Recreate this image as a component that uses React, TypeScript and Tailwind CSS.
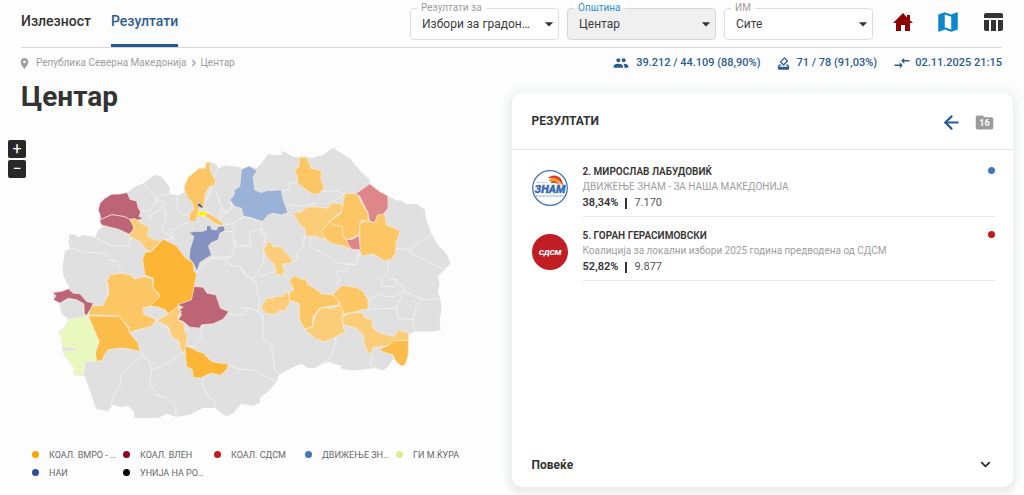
import { useState } from "react";
import type { ReactNode } from "react";
import { ArrowLeft, ChevronDown, ChevronRight } from "lucide-react";
import {
  MdArrowDropDown,
  MdCompareArrows,
  MdFolder,
  MdGroup,
  MdHowToVote,
  MdMap,
  MdPlace,
  MdTableChart,
} from "react-icons/md";

type Region = { d: string; fill: string };

// --- MAP DATA ---
const COUNTRY =
  "M68 375L75 335 90 325 85 310 88 284 105 284 115 292 130 285 165 292 175 270 188 260 180 245 182 230 175 210 180 190 195 175 215 163 240 162 262 158 285 140 310 130 345 104 365 110 388 140 390 162 415 167 432 158 433 140 445 112 478 85 497 85 497 68 512 66 528 72 535 85 560 76 600 82 608 88 628 78 650 85 665 70 685 42 705 45 725 45 728 32 765 52 800 50 815 55 850 45 870 30 888 22 892 15 885 28 910 42 930 55 960 90 990 120 990 132 1020 155 1045 168 1070 182 1085 182 1100 193 1130 192 1155 208 1160 240 1175 280 1195 315 1220 340 1233 370 1215 390 1195 410 1200 430 1195 455 1203 480 1206 510 1200 540 1203 570 1185 575 1125 575 1105 585 1105 640 1095 677 1080 677 1062 658 1045 680 1030 692 1010 685 945 692 905 688 903 678 870 668 850 670 825 685 805 685 785 672 750 688 718 705 708 730 685 755 660 775 660 790 640 798 605 792 580 820 560 830 525 805 490 805 450 825 408 832 380 822 355 835 283 835 282 815 265 800 245 802 218 795 205 815 168 807 135 710 100 705 103 682 75 650 65 625 65 600 57 575 75 560 85 540 65 520 58 492 40 475 40 458 85 448 88 440 70 410Z";

const BORDERS = [
  "M310 130L350 175 348 190 325 215 300 212",
  "M345 180L365 165 390 162M350 180L375 185 360 210 325 228 340 238",
  "M375 200L378 240 365 270 385 285 402 295 372 300",
  "M410 167L415 215 432 225 448 222M402 280L395 275 425 255 448 245",
  "M402 295L395 285 405 310 408 318",
  "M165 292L215 318 270 317 272 290M90 325L140 337 200 340 210 360 230 365 243 400",
  "M535 85L520 115M515 145L490 200M528 150L545 200 540 230 550 260M515 140L500 180",
  "M545 200L555 220 575 200 570 180M550 225L565 215 600 190 610 220",
  "M610 230L580 250 555 255M552 275L580 275 585 320 575 350 515 352M580 250L585 270",
  "M585 300L590 320 630 318M575 350L560 358 515 355 490 375 468 398M560 358L570 375 600 380 620 410",
  "M605 225L610 230 665 245 665 265 630 275 630 300 632 320 605 315",
  "M665 265L680 290 672 315M665 265L662 275 680 300",
  "M600 380L625 410 640 415 650 405 660 380 672 370 672 318",
  "M745 220L725 210M720 155L745 150 750 128 772 128M720 180L745 195 790 198 830 190",
  "M840 155L885 152 915 162 870 190",
  "M795 285L790 320 770 340 770 360 755 365M812 292L812 320 850 340 895 370 950 375 960 330",
  "M960 345L925 380 920 392 890 395 900 420 890 437",
  "M1045 360L1045 400 1025 420 1025 440 1065 440 1072 420 1045 415M1068 325L1110 330 1140 305 1175 285",
  "M1110 330L1120 345 1165 365 1215 390",
  "M650 430L650 455 660 480 655 520 670 525 670 600 695 615 705 690 720 705",
  "M600 505L630 505 655 515M625 410L650 432M660 410L705 395M730 400L750 418",
  "M890 595L885 615 875 650 855 665 880 670M915 555L895 580 885 600",
  "M985 470L990 480 1020 460 1040 470 1065 470 1090 455 1095 440 1075 430M985 508L1070 505 1075 535 1120 540 1125 575",
  "M1090 455L1150 478 1200 478M1150 478L1130 500 1120 540M1070 505L1085 470",
  "M990 640L998 650 992 675 1010 685",
  "M600 688L640 690 670 705 708 725",
  "M58 492L85 480 125 480M65 520L85 540 140 530M145 525L160 498 190 500 205 460 202 420",
  "M270 575L300 570 350 545M350 540L385 565 395 590 425 610 428 640M308 650L325 660 335 690 365 680 400 660 430 640",
  "M300 635L310 645 245 700 240 740 218 775 213 800M170 665L135 665 130 705",
  "M335 690L330 730 350 765 380 775 408 800 408 832",
  "M435 575L455 560 480 565 487 590 465 622 440 618M485 565L520 520M565 520L600 528 630 505M565 675L600 688",
  "M490 712L487 730 505 770 525 785 525 805",
];

const REGIONS: Region[] = [
  { fill: "#bd6577", d: "M180 245L182 230 175 210 180 190 195 175 215 163 240 162 262 158 270 178 290 183 295 205 302 215 298 230 312 235 285 243 270 238 282 260 280 272 268 283 235 268 185 255Z" },
  { fill: "#fbcd79", d: "M270 238L285 236 312 255 328 262 322 288 345 300 365 303 332 335 318 328 300 305 268 290 270 282 283 265Z" },
  { fill: "#fcc665", d: "M433 140L445 112 478 85 497 85 497 68 510 66 512 95 520 110 528 120 525 135 508 140 495 165 492 200 475 215 480 225 468 235 472 243 448 245 450 220 462 208 458 190 440 168Z" },
  { fill: "#e0e0e0", d: "M478 205L500 208 505 218 525 232 545 255 520 240 490 230 475 222Z" },
  { fill: "#fcc665", d: "M492 226L505 220 530 234 548 248 548 260 525 250Z" },
  { fill: "#ffef00", d: "M473 218L485 214 503 216 498 225 488 230 473 225Z" },
  { fill: "#555e78", d: "M472 190L480 190 491 202 486 205 472 197Z" },
  { fill: "#8591c1", d: "M447 278L468 274 485 275 500 270 500 258 512 256 515 268 530 270 535 260 552 258 556 272 540 280 535 300 515 308 506 318 515 345 480 368 472 395 460 370 448 355 450 330 462 290Z" },
  { fill: "#9ab1d8", d: "M605 88L628 78 652 92 640 110 645 150 665 158 680 152 725 150 730 178 745 218 725 225 700 220 685 225 668 245 640 235 610 228 605 205 585 200 570 180 583 165 583 150 600 140Z" },
  { fill: "#fcc665", d: "M778 52L800 52 815 85 847 92 843 115 853 145 835 163 818 162 772 130 775 118 765 90 778 80Z" },
  { fill: "#fbcd79", d: "M760 220L785 215 800 203 820 200 865 205 870 190 900 190 910 200 905 215 870 245 850 270 860 295 835 295 830 288 800 290 795 265 780 255Z" },
  { fill: "#fcc665", d: "M915 162L950 160 970 195 985 220 985 245 965 240 958 285 925 300 910 290 905 260 875 255 870 245 905 220Z" },
  { fill: "#fcc665", d: "M870 245L880 255 908 260 910 290 922 300 935 328 910 318 875 310 855 295 845 275Z" },
  { fill: "#de868a", d: "M947 162L990 132 1020 155 1045 168 1045 205 1030 225 1015 225 1005 248 990 245 985 218 970 190 960 168Z" },
  { fill: "#fcc665", d: "M960 250L980 243 1005 248 1015 225 1035 222 1040 255 1082 272 1070 305 1068 340 1055 358 1035 363 1000 342 970 348 960 335Z" },
  { fill: "#de868a", d: "M920 300L938 298 958 287 962 330 935 328 925 312Z" },
  { fill: "#fcb535", d: "M370 297L410 318 438 355 460 368 462 395 471 402 463 440 462 480 440 485 420 493 412 502 385 522 375 510 330 500 340 480 360 465 340 445 340 415 315 405 308 360 315 338 335 335Z" },
  { fill: "#fcc665", d: "M192 420L205 418 210 405 245 400 270 405 285 418 312 410 338 418 340 445 360 470 330 500 310 505 315 525 350 540 335 560 300 568 270 578 265 560 235 528 145 525 155 498 188 498 207 460 202 425Z" },
  { fill: "#e0e0e0", d: "M308 505L335 500 350 500 375 510 382 522 350 540 330 525 312 525Z" },
  { fill: "#bd6577", d: "M463 440L490 442 502 460 528 465 535 485 542 505 567 515 550 538 520 552 485 555 480 565 450 562 430 545 415 540 425 525 418 510 430 502 413 495 440 485 455 480Z" },
  { fill: "#bd6577", d: "M38 458L65 455 85 447 100 460 120 462 140 485 160 490 155 502 140 527 133 520 132 492 110 480 85 475 60 490 40 480 48 468Z" },
  { fill: "#e9f8bd", d: "M85 540L145 528 165 565 178 600 168 625 170 665 135 665 130 708 100 705 103 685 88 665 75 645 70 625 65 600 57 575 75 565Z" },
  { fill: "#e0e0e0", d: "M65 628L80 622 118 627 100 633 70 633Z" },
  { fill: "#fcbc4a", d: "M145 528L238 530 265 565 270 580 295 610 300 635 270 628 245 625 205 630 190 650 190 660 170 665 166 640 178 605Z" },
  { fill: "#fbcd79", d: "M350 543L385 522 412 502 425 515 415 525 415 540 432 550 435 575 442 590 438 625 430 640 420 625 418 605 395 590 385 560Z" },
  { fill: "#fcb535", d: "M435 618L455 625 475 635 490 640 515 665 540 670 567 673 560 690 542 707 515 700 490 710 485 715 460 713 458 690 440 680Z" },
  { fill: "#fbcd79", d: "M682 308L690 305 702 322 722 320 745 345 758 360 755 370 733 372 728 380 735 395 728 405 708 405 705 375 680 350 670 325 680 320Z" },
  { fill: "#fbcd79", d: "M665 500L680 475 700 475 710 468 725 470 745 455 752 485 735 515 720 512 705 523 680 522 668 510Z" },
  { fill: "#fcc665", d: "M748 420L765 408 790 420 795 412 805 435 830 448 845 462 880 465 900 480 895 490 905 495 865 500 840 505 820 530 818 560 795 568 780 540 778 490 750 482 748 460 762 450Z" },
  { fill: "#fcc665", d: "M880 462L908 437 950 442 970 455 985 480 985 508 965 510 950 515 910 523 900 490 890 475Z" },
  { fill: "#fbcd79", d: "M795 570L818 562 825 530 845 502 865 505 880 505 900 495 910 510 907 545 915 578 890 590 855 607 825 595Z" },
  { fill: "#fbcd79", d: "M907 532L930 520 965 517 975 533 998 540 1000 565 1020 580 1060 590 1070 583 1075 570 1107 580 1107 603 1060 607 1045 618 1000 623 995 640 985 640 975 615 970 585 950 565 910 555Z" },
  { fill: "#fcbc4a", d: "M1018 630L1045 618 1060 603 1107 602 1105 650 1095 678 1082 677 1065 658 1060 645 1035 638Z" },
];

const legend = [
  { label: "КОАЛ. ВМРО - …", dot: "bg-[#ffa500]" },
  { label: "КОАЛ. ВЛЕН", dot: "bg-[#900020]" },
  { label: "КОАЛ. СДСМ", dot: "bg-[#c11b20]" },
  { label: "ДВИЖЕЊЕ ЗН…", dot: "bg-[#4677b5]" },
  { label: "ГИ М.ЌУРА", dot: "bg-[#dfed8f]" },
  { label: "НАИ", dot: "bg-[#2c4f9e]" },
  { label: "УНИЈА НА РО…", dot: "bg-black" },
];

function MunicipalityMap() {
  return (
    <svg
      viewBox="0 0 1245 870"
      className="block w-full"
      role="img"
      aria-label="Мапа"
    >
      <path d={COUNTRY} fill="#e0e0e0" />
      <g fill="none" stroke="#f1f1f1" strokeWidth="3" strokeLinejoin="round">
        {BORDERS.map((d) => (
          <path key={d} d={d} />
        ))}
      </g>
      <g stroke="#f8eee0" strokeWidth="2" strokeLinejoin="round">
        {REGIONS.map((r) => (
          <path key={r.d} d={r.d} fill={r.fill} />
        ))}
      </g>
      <path
        d="M180 240L215 224 255 230 272 240"
        fill="none"
        stroke="#f1dce0"
        strokeWidth="3"
      />
    </svg>
  );
}

function ZnamLogo() {
  return (
    <svg viewBox="0 0 36 36" className="size-9 shrink-0 mt-[7px]" aria-hidden="true">
      <circle cx="18" cy="18" r="17.3" fill="#fff" stroke="#4677b5" strokeWidth="1.3" />
      <path d="M16 8C21 3 31 5 31 16C28 10 23 8 16 8Z" fill="#e5342b" />
      <path d="M17 9.500C23 6 28 9 30 16C26 11 22 10 17 11.500Z" fill="#f9a51c" />
      <path d="M19 11.500C23 10 26 12 28 15C25 13 22 12.500 19 13Z" fill="#e5342b" />
      <path d="M5 12.500h10" stroke="#a9bfdd" strokeWidth="1" strokeDasharray="1 .5" />
      <text
        x="18"
        y="23"
        textAnchor="middle"
        fontSize="11"
        fontWeight="900"
        fontStyle="italic"
        fill="#3569ae"
        stroke="#3569ae"
        strokeWidth=".3"
      >
        ЗНАМ
      </text>
      <path d="M4 26h28" stroke="#9db6d8" strokeWidth="1.500" strokeDasharray="1 .4" />
    </svg>
  );
}

function SdsmLogo() {
  return (
    <svg viewBox="0 0 36 36" className="size-9 shrink-0 mt-[7px]" aria-hidden="true">
      <circle cx="18" cy="18" r="18" fill="#c01d24" />
      <text
        x="18"
        y="21"
        textAnchor="middle"
        fontSize="8"
        fontWeight="900"
        fontStyle="italic"
        fill="#fff"
      >
        СДСМ
      </text>
    </svg>
  );
}

type FilterProps = {
  id: string;
  label: string;
  value: string;
  active?: boolean;
};

function FilterSelect({ id, label, value, active }: FilterProps) {
  return (
    <div className="relative w-[149px]">
      <label
        htmlFor={id}
        className={`absolute -top-2 left-[7px] px-1 text-[10px] leading-4 ${
          active
            ? "text-[#2f8fd0] bg-linear-to-b from-white from-50% to-[#f0f0f0] to-50%"
            : "text-[#9e9e9e] bg-white"
        }`}
      >
        {label}
      </label>
      <select
        id={id}
        defaultValue={value}
        className={`block w-full h-8 pl-[11px] pr-6 text-xs text-[#3c3c3c] appearance-none truncate rounded border outline-none ${
          active ? "bg-[#f0f0f0] border-[#d5d5d5]" : "bg-white border-[#dedede]"
        }`}
      >
        <option>{value}</option>
      </select>
      <MdArrowDropDown
        size={20}
        className="absolute right-0 top-1.5 text-[#333] pointer-events-none"
      />
    </div>
  );
}

type CandidateProps = {
  logo: ReactNode;
  name: string;
  party: string;
  percent: string;
  votes: string;
  dot: string;
};

function Candidate({ logo, name, party, percent, votes, dot }: CandidateProps) {
  return (
    <li className="flex gap-[15px] pl-5 pr-[18px] pt-[10px]">
      {logo}
      <div className="flex-1 min-w-0 pb-[3px] border-b border-[#e6e6e6]">
        <div className="flex justify-between">
          <h3 className="text-[10px] leading-[18px] font-semibold text-[#333]">{name}</h3>
          <span className={`size-[7px] mt-1 rounded-full ${dot}`} />
        </div>
        <p className="text-[10px] leading-3 text-[#9e9e9e]">{party}</p>
        <p className="flex items-center text-[11px] leading-5 text-[#555]">
          <span className="font-semibold text-[#333]">{percent}</span>
          <span className="w-[2px] h-[11px] mx-[7px] bg-[#333]" />
          {votes}
        </p>
      </div>
    </li>
  );
}

export default function App() {
  const [zoom, setZoom] = useState(1);

  return (
    <div className="min-h-screen overflow-hidden bg-[#fdfdfd] font-[Roboto,'Open_Sans',sans-serif] text-[#333]">
      {/* Header */}
      <header className="flex justify-between ml-[21px] mr-[22px] h-12 border-b border-[#d8d8d8]">
        <nav className="flex gap-5 text-sm font-medium">
          <a href="#turnout" className="flex items-center pb-[5px]">
            Излезност
          </a>
          <a
            href="#results"
            className="flex items-center pt-[3px] pb-[5px] text-[#2c5c8f] border-b-3 border-[#255a8c]"
          >
            Резултати
          </a>
        </nav>
        <div className="flex items-start pt-2">
          <div className="flex gap-2">
            <FilterSelect id="race" label="Резултати за" value="Избори за градон…" />
            <FilterSelect id="municipality" label="Општина" value="Центар" active />
            <FilterSelect id="station" label="ИМ" value="Сите" />
          </div>
          <div className="flex items-center gap-5 h-7 ml-[18px] -mr-[3px]">
            <button aria-label="Почетна" className="text-[#8b0000]">
              <svg viewBox="0 0 24 24" className="size-6" fill="currentColor">
                <path d="M10 21v-6h4v6h5v-8h3l-3-2.700V5h-3v2.600L12 3 2 13h3v8z" />
              </svg>
            </button>
            <button aria-label="Мапа" className="text-[#0d86cb]">
              <MdMap size={26} />
            </button>
            <button aria-label="Табела">
              <MdTableChart size={24} />
            </button>
          </div>
        </div>
      </header>

      {/* Breadcrumb and totals */}
      <div className="flex justify-between ml-[21px] mr-[22px] pt-[5px] text-[11px] leading-5">
        <div className="flex items-center text-[10px] text-[#9e9e9e]">
          <MdPlace size={13} className="-ml-[3px] mr-[5px]" />
          <a href="#country">Република Северна Македонија</a>
          <ChevronRight size={10} strokeWidth={3} className="mx-[2px]" />
          <a href="#center">Центар</a>
        </div>
        <div className="flex gap-4 font-medium text-[#2c5c8f]">
          <span className="flex items-center gap-[7px]">
            <MdGroup size={16} /> 39.212 / 44.109 (88,90%)
          </span>
          <span className="flex items-center gap-[5px]">
            <MdHowToVote size={15} /> 71 / 78 (91,03%)
          </span>
          <span className="flex items-center gap-1">
            <MdCompareArrows size={18} /> 02.11.2025 21:15
          </span>
        </div>
      </div>

      <main className="flex pr-[11px]">
        <section className="flex-1 min-w-0">
          <h1 className="ml-[21px] mt-1.5 text-[28px] leading-9 font-bold">Центар</h1>

          <div className="flex mt-[25px] pl-2">
            <div className="flex flex-col gap-[2px] w-8">
              <button
                aria-label="Зголеми"
                onClick={() => setZoom(Math.min(zoom + 0.25, 3))}
                className="size-[18px] rounded-xs bg-[#282828] text-white text-base leading-[18px]"
              >
                +
              </button>
              <button
                aria-label="Намали"
                onClick={() => setZoom(Math.max(zoom - 0.25, 1))}
                className="size-[18px] rounded-xs bg-[#282828] text-white text-base leading-[18px]"
              >
                −
              </button>
            </div>
            <div className="flex-1 mr-[57px] overflow-hidden">
              <div style={{ scale: zoom }}>
                <MunicipalityMap />
              </div>
            </div>
          </div>

          <ul className="grid grid-cols-[repeat(5,91px)] mt-4 ml-8 text-[9px] leading-[18px] text-[#666]">
            {legend.map((item) => (
              <li key={item.label} className="flex items-center min-w-0">
                <span className={`size-[7px] mr-[10px] shrink-0 rounded-full ${item.dot}`} />
                <span className="whitespace-nowrap">{item.label}</span>
              </li>
            ))}
          </ul>
        </section>

        {/* Results card */}
        <section className="flex flex-col w-[49.500%] min-h-[394px] mt-5 rounded-[10px] bg-white shadow-[0_4px_5px_2px_#ededed,0_0_6px_6px_#f3f8f4]">
          <div className="flex items-center justify-between h-[57px] pl-5 pr-[18px] border-b border-[#e6e6e6]">
            <h2 className="text-xs font-bold">РЕЗУЛТАТИ</h2>
            <div className="flex items-center gap-3 pt-[2px]">
              <button aria-label="Назад" className="text-[#2c5c8f]">
                <ArrowLeft size={21} strokeWidth={2.5} />
              </button>
              <button aria-label="Папка" className="relative text-[#9b9b9b]">
                <MdFolder size={21} />
                <span className="absolute inset-0 pt-1 text-[9px] leading-[15px] text-center font-bold text-white">
                  16
                </span>
              </button>
            </div>
          </div>

          <ul className="pt-[3px]">
            <Candidate
              logo={<ZnamLogo />}
              name="2. МИРОСЛАВ ЛАБУДОВИЌ"
              party="ДВИЖЕЊЕ ЗНАМ - ЗА НАША МАКЕДОНИЈА"
              percent="38,34%"
              votes="7.170"
              dot="bg-[#4677b5]"
            />
            <Candidate
              logo={<SdsmLogo />}
              name="5. ГОРАН ГЕРАСИМОВСКИ"
              party="Коалиција за локални избори 2025 година предводена од СДСМ"
              percent="52,82%"
              votes="9.877"
              dot="bg-[#c11b20]"
            />
          </ul>

          <button className="flex items-center justify-between mt-auto h-[45px] pl-5 pr-5 text-xs font-bold">
            Повеќе
            <ChevronDown size={15} strokeWidth={3} />
          </button>
        </section>
      </main>
    </div>
  );
}
